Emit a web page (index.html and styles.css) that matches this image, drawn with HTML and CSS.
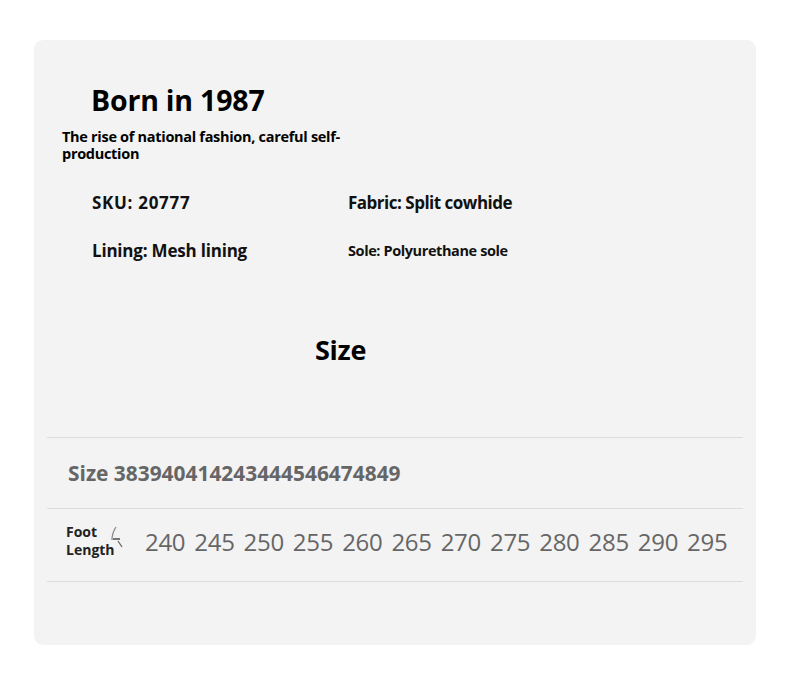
FILE: index.html
```html
<!DOCTYPE html>
<html>
<head>
<meta charset="utf-8">
<link rel="stylesheet" href="styles.css">
</head>
<body>
<div class="card">
  <div class="intro">
    <h1 class="title">Born in 1987</h1>
    <p class="subtitle">The rise of national fashion, careful self-production</p>
  </div>
  <div class="specs">
    <div class="spec sku">SKU: 20777</div>
    <div class="spec fabric">Fabric: Split cowhide</div>
    <div class="spec">Lining: Mesh lining</div>
    <div class="spec small">Sole: Polyurethane sole</div>
  </div>
  <h2 class="size-title">Size</h2>
  <div class="table">
    <div class="row size-row">Size 383940414243444546474849</div>
    <div class="row foot-row">
      <div class="foot-label">Foot<br>Length<svg class="mark" width="16" height="26" viewBox="0 0 16 26"><path d="M7 2 C5 5 3 9 3 15" fill="none" stroke="#8a8a8a" stroke-width="1.3"/><path d="M4 14 L11 14" fill="none" stroke="#555" stroke-width="1.6"/><path d="M9 16 L13 22" fill="none" stroke="#666" stroke-width="1.3"/></svg></div>
      <div class="nums">
        <span>240</span><span>245</span><span>250</span><span>255</span><span>260</span><span>265</span><span>270</span><span>275</span><span>280</span><span>285</span><span>290</span><span>295</span>
      </div>
    </div>
  </div>
</div>
</body>
</html>
```
FILE: styles.css
```css
* { box-sizing: border-box; }
html, body { margin: 0; padding: 0; background: #ffffff; }
body {
  font-family: "Open Sans", "Liberation Sans", sans-serif;
  padding: 40px 34px 0 34px;
}
.card {
  width: 722px;
  height: 605px;
  background: #f3f3f3;
  border-radius: 9px;
  padding: 0 13px;
}
.intro { padding-top: 43px; }
.title {
  margin: 0 0 0 44px;
  font-size: 28.5px;
  font-weight: 700;
  line-height: 34px;
  letter-spacing: -0.2px;
  color: #000;
}
.subtitle {
  margin: 11px 0 0 15px;
  width: 300px;
  font-size: 14.5px;
  font-weight: 700;
  line-height: 17px;
  letter-spacing: -0.3px;
  color: #000;
}
.specs {
  display: grid;
  grid-template-columns: 256px auto;
  row-gap: 24px;
  margin: 29px 0 0 45px;
  height: 72px;
}
.spec {
  font-size: 17px;
  font-weight: 700;
  line-height: 24px;
  letter-spacing: -0.2px;
  color: #111;
}
.spec.sku { letter-spacing: 0.7px; }
.spec.fabric { letter-spacing: -0.5px; }
.spec.small { font-size: 14.5px; letter-spacing: -0.4px; }
.size-title {
  margin: 70px 0 0 268px;
  font-size: 27px;
  font-weight: 700;
  line-height: 34px;
  letter-spacing: -0.3px;
  color: #000;
}
.table {
  margin-top: 70px;
  border-top: 1px solid #dcdcdc;
}
.row {
  border-bottom: 1px solid #dcdcdc;
  display: flex;
  align-items: center;
}
.size-row {
  height: 71px;
  padding-left: 21px;
  padding-bottom: 1px;
  font-size: 20.9px;
  font-weight: 700;
  letter-spacing: 0;
  color: #666;
}
.foot-row { height: 73px; padding-left: 19px; padding-bottom: 8px; }
.foot-label {
  position: relative;
  width: 79px;
  font-size: 14px;
  font-weight: 700;
  line-height: 18px;
  color: #222;
}
.mark {
  position: absolute;
  left: 43px;
  top: 2px;
}
.nums {
  display: flex;
  gap: 9px;
  font-size: 24px;
  font-weight: 400;
  color: #666;
  letter-spacing: -0.3px;
}
```
